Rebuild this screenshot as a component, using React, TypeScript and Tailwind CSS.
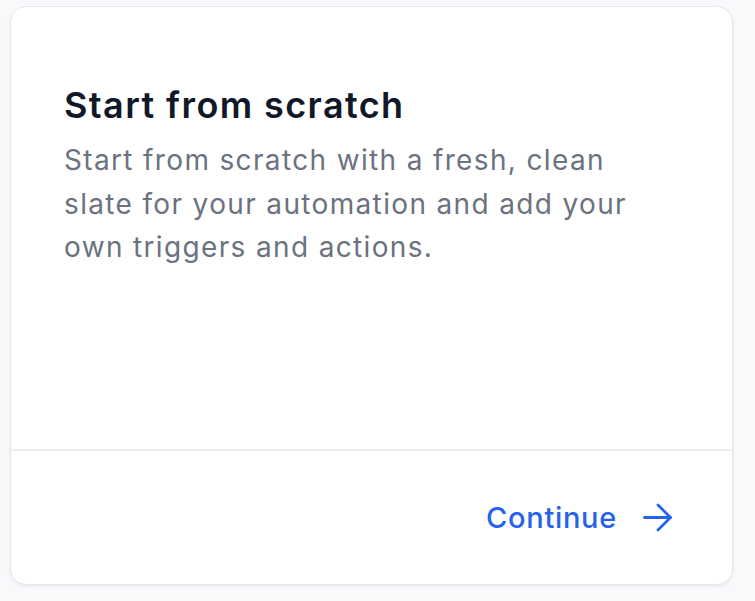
export default function App() {
  return (
    <div className="min-h-screen bg-[#f8f9fb] pl-[10px] pt-[6px] font-['Inter',sans-serif]">
      <div className="flex h-[579px] w-[723px] flex-col rounded-[16px] border border-[#e4e6ec] bg-white shadow-[0_2px_4px_rgba(17,24,39,0.06)]">
        <div className="flex-1 px-[53px] pt-[76px]">
          <h2 className="text-[36px] font-semibold leading-[44px] tracking-[1.4px] text-[#111827]">Start from scratch</h2>
          <p className="mt-[12px] max-w-[590px] text-[28px] leading-[43.5px] tracking-[1.35px] text-[#6b7280]">
            Start from scratch with a fresh, clean slate for your automation and add your own triggers and actions.
          </p>
        </div>
        <div className="flex h-[135px] items-center justify-end border-t-2 border-[#eceef2] pr-[60px]">
          <button type="button" className="flex items-center gap-[26px] text-[29px] font-medium tracking-[0.7px] text-[#2563eb]">
            Continue
            <svg width="29" height="29" viewBox="0 0 29 29" fill="none" stroke="currentColor" strokeWidth="2.8" strokeLinecap="round" strokeLinejoin="round">
              <path d="M1.5 14.5h26" />
              <path d="M15 2l12.5 12.5L15 27" />
            </svg>
          </button>
        </div>
      </div>
    </div>
  )
}
